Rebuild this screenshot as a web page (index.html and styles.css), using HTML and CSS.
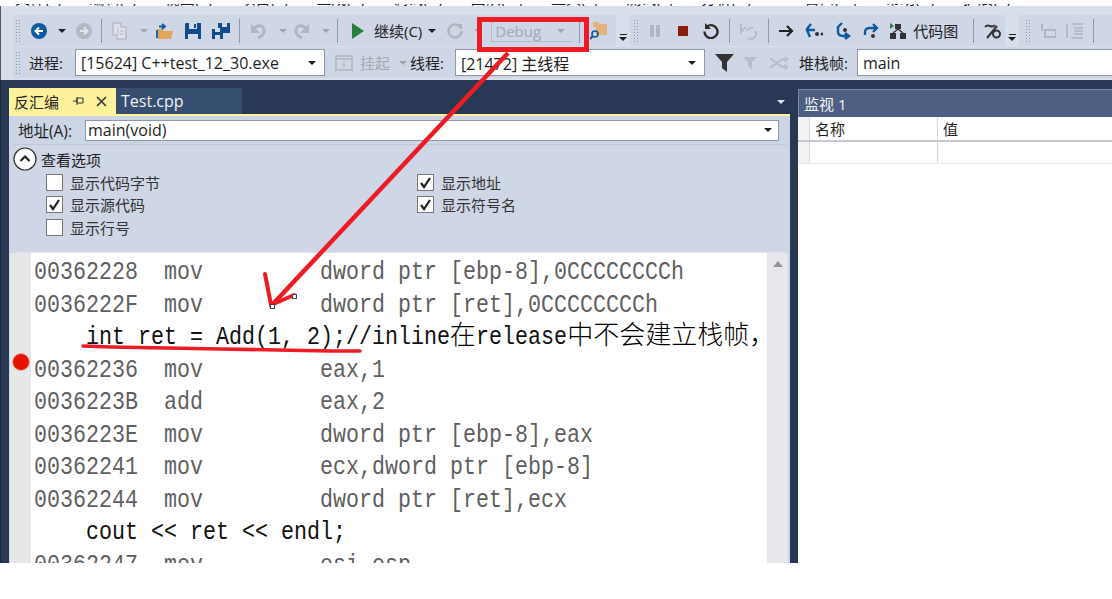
FILE: index.html
```html
<!DOCTYPE html>
<html lang="zh-CN">
<head>
<meta charset="utf-8">
<title>反汇编</title>
<link rel="stylesheet" href="styles.css">
</head>
<body>
<div class="page">
  <div class="menu"><div class="menu-clip"><div class="menu-text"><span>文件(F)</span><span>编辑(E)</span><span>视图(V)</span><span>项目(P)</span><span>生成(B)</span><span>调试(D)</span><span>团队(M)</span><span>工具(T)</span><span>测试(S)</span><span class="wide">分析(N)</span><span>窗口(W)</span><span>帮助(H)</span><span>扩展(X)</span></div></div></div>
  <div class="chrome">
    <div class="bar">
      <i class="grip"></i>
      <svg class="m10" width="16" height="16" viewBox="0 0 16 16"><circle cx="8" cy="8" r="8" fill="#0e5a9e"/><path d="M12 8H5M8 4.500 4.500 8 8 11.500" fill="none" stroke="#fff" stroke-width="2"/></svg>
      <i class="arrow dark m11"></i>
      <svg class="m11" width="16" height="16" viewBox="0 0 16 16"><circle cx="8" cy="8" r="8" fill="#b4b9c2"/><path d="M4 8h7M8 4.500 11.500 8 8 11.500" fill="none" stroke="#e3e6ee" stroke-width="2"/></svg>
      <i class="sep m9"></i>
      <svg class="m10" width="16" height="18" viewBox="0 0 16 18"><path d="M1 1h8v4h5v12H5V13H1z" fill="#dfe2ea" stroke="#b8bcc6" stroke-width="1.500"/><path d="M6 6v7M8 9h4M8 12h4" stroke="#b8bcc6"/></svg>
      <i class="arrow m12"></i>
      <svg class="m9" width="18" height="18" viewBox="0 0 18 18"><path d="M1 7h5l2 2h9l-2 8H2z" fill="#e2a75d"/><path d="M1 8v8M3 4.500h5M6 2l3 2.500L6 7" fill="none" stroke="#0e5a9e" stroke-width="1.800"/></svg>
      <svg class="m11" width="16" height="16" viewBox="0 0 16 16"><path d="M1 0h15v16H0V1z" fill="#0e4c8f"/><path d="M4 0h8v6H4zM3 11h10v5H3z" fill="#d3d9e7"/><path d="M9 1h2v4H9z" fill="#0e4c8f"/></svg>
      <svg class="m11" width="18" height="16" viewBox="0 0 18 16"><path d="M6 0h12v10H8V5H6z" fill="#0e4c8f"/><path d="M10 0h5v4h-5z" fill="#d3d9e7"/><path d="M0 6h11v10H0z" fill="#0e4c8f"/><path d="M3 6h5v3H3zM3 12h5v4H3z" fill="#d3d9e7"/></svg>
      <i class="sep m9"></i>
      <svg class="m10" width="16" height="16" viewBox="0 0 16 16"><path d="M1 1v9h9z" fill="#b0b5bf"/><path d="M4 5c3-3 9-3 10 1 1 4-2 7-6 9" fill="none" stroke="#b0b5bf" stroke-width="3"/></svg>
      <i class="arrow m13"></i>
      <svg class="m8" width="16" height="16" viewBox="0 0 16 16"><path d="M15 1v9H6z" fill="#b0b5bf"/><path d="M12 5C9 2 3 2 2 6c-1 4 2 7 6 9" fill="none" stroke="#b0b5bf" stroke-width="3"/></svg>
      <i class="arrow m12"></i>
      <i class="sep m8"></i>
      <svg class="m14" width="12" height="16" viewBox="0 0 12 16"><path d="M0 0l12 8-12 8z" fill="#26803a"/></svg>
      <span class="label m10">继续(C)</span>
      <i class="arrow dark m6"></i>
      <svg class="m12" width="16" height="16" viewBox="0 0 16 16"><path d="M13.500 4.500A6.500 6.500 0 1 0 14.500 8" fill="none" stroke="#b0b5bf" stroke-width="2.500"/><path d="M9 1h6v6z" fill="#b0b5bf"/></svg>
      <i class="arrow m11"></i>
      <div class="debug m10"><span>Debug</span><i class="arrow"></i></div>
      <i class="sep m7"></i>
      <svg class="m10" width="18" height="20" viewBox="0 0 18 20"><path d="M3 1h5l2 2h7v11H6V6H3z" fill="#e2b376"/><circle cx="5" cy="13" r="3" fill="none" stroke="#0e5a9e" stroke-width="1.600"/><path d="M3 15l-3 3" stroke="#0e5a9e" stroke-width="2"/></svg>
      <div class="band m8"><b></b><i class="arrow dark"></i></div>
      <i class="grip small m3"></i>
      <svg class="m12" width="10" height="12" viewBox="0 0 10 12"><path d="M0 0h4v12H0zM6 0h4v12H6z" fill="#b0b5bf"/></svg>
      <svg class="m18" width="10" height="10" viewBox="0 0 10 10"><path d="M0 0h10v10H0z" fill="#8e1e0c"/></svg>
      <svg class="m15" width="16" height="16" viewBox="0 0 16 16"><path d="M4 3.500A6.500 6.500 0 1 1 1.500 8.500" fill="none" stroke="#2c2c2c" stroke-width="2.400"/><path d="M2 0v6h6z" fill="#2c2c2c"/></svg>
      <i class="sep m10"></i>
      <svg class="m9" width="18" height="18" viewBox="0 0 18 18"><path d="M2 2v8l5-5M9 16a5 5 0 0 0 7-7M8 9a5 5 0 0 1 6-3" fill="none" stroke="#b8bcc6" stroke-width="2"/></svg>
      <i class="sep m11"></i>
      <svg class="m10" width="15" height="12" viewBox="0 0 15 12"><path d="M0 6h13M8 1l5 5-5 5" fill="none" stroke="#222" stroke-width="2.200"/></svg>
      <svg class="m11" width="18" height="16" viewBox="0 0 18 16"><path d="M6 1L2 6v1h8M5 14l-3-7" fill="none" stroke="#0e5a9e" stroke-width="2.400"/><circle cx="12" cy="11" r="2" fill="#333"/><circle cx="17" cy="11" r="1.500" fill="#333"/></svg>
      <svg class="m13" width="16" height="18" viewBox="0 0 16 18"><path d="M6 1L2 5v5c0 3 2 4 5 4h5M9 11l4 3-4 3" fill="none" stroke="#0e5a9e" stroke-width="2.400"/><circle cx="9" cy="8" r="2" fill="#333"/></svg>
      <svg class="m11" width="16" height="16" viewBox="0 0 16 16"><path d="M13 5H6a4 4 0 0 0-4 4v3M10 1l4 4-4 4" fill="none" stroke="#0e5a9e" stroke-width="2.400"/><circle cx="10" cy="13" r="2" fill="#333"/></svg>
      <svg class="m11" width="16" height="16" viewBox="0 0 16 16"><path d="M0 0l4 3-4 3z" fill="#26803a"/><path d="M5 1h6v5H5zM0 10h6v6H0zM10 10h6v6h-6z" fill="#333"/><path d="M8 6L3 10M8 6l5 4" stroke="#333" stroke-width="1.500"/></svg>
      <span class="label m7">代码图</span>
      <i class="sep m15"></i>
      <svg class="m10" width="18" height="17" viewBox="0 0 18 17"><path d="M1 5c4-5 6 3 10-2M3 16L13 4" fill="none" stroke="#333" stroke-width="2"/><circle cx="12.500" cy="12" r="3.500" fill="none" stroke="#333" stroke-width="2"/></svg>
      <div class="band m3"><b></b><i class="arrow dark"></i></div>
      <i class="grip small m6"></i>
      <svg class="m10" width="16" height="16" viewBox="0 0 16 16"><path d="M5 7h11v7H5zM2 1v7" fill="none" stroke="#b0b5bf" stroke-width="2"/></svg>
      <svg class="m10" width="18" height="16" viewBox="0 0 18 16"><path d="M1 1v14M5 1h12M5 15h12M8 5h9M8 8h9M8 11h9" stroke="#b8bcc6" stroke-width="2"/></svg>
      <i class="sep m9"></i>
    </div>
    <div class="bar second">
      <i class="grip"></i>
      <span class="label m8">进程:</span>
      <div class="combo process m12"><span>[15624] C++test_12_30.exe</span><i class="arrow dark"></i></div>
      <svg class="m10" width="18" height="16" viewBox="0 0 18 16"><path d="M1 1h16v14H1z" fill="none" stroke="#b8bcc6" stroke-width="2"/><path d="M1 4h16" stroke="#b8bcc6" stroke-width="2"/><path d="M10 6L7 10h3l-2 3" fill="none" stroke="#b8bcc6"/></svg>
      <span class="label muted m7">挂起</span>
      <i class="arrow m9"></i>
      <span class="label m4">线程:</span>
      <div class="combo thread m11"><span>[21472] 主线程</span><i class="arrow dark"></i></div>
      <svg class="m10" width="19" height="18" viewBox="0 0 19 18"><path d="M0 0h19l-7 8v10l-5-4V8z" fill="#333"/></svg>
      <svg class="m9" width="15" height="16" viewBox="0 0 15 16"><path d="M0 2h14l-5 5v7l-4-3V7z" fill="#b8bcc6"/></svg>
      <svg class="m12" width="18" height="12" viewBox="0 0 18 12"><path d="M0 2c4 0 9 8 14 8M0 10c4 0 9-8 14-8M14 0l4 2-4 2M14 8l4 2-4 2" fill="none" stroke="#b8bcc6" stroke-width="2"/></svg>
      <span class="label m11">堆栈帧:</span>
      <div class="combo frame m9"><span>main</span></div>
    </div>
  </div>
  <div class="body">
    <div class="doc">
      <div class="tabs">
        <div class="tab active"><span>反汇编</span><svg width="12" height="10" viewBox="0 0 12 10"><path d="M0 5h4M4 1v8M4 2h6v5H4z" fill="none" stroke="#333" stroke-width="1"/></svg><svg width="11" height="11" viewBox="0 0 11 11"><path d="M1 1l9 9M10 1l-9 9" stroke="#333" stroke-width="1.500"/></svg></div>
        <div class="tab other">Test.cpp</div>
        <i class="arrow white tabs-menu"></i>
      </div>
      <div class="doc-inner">
        <div class="address">
          <span class="addr-label">地址(A):</span>
          <div class="combo addr"><span>main(void)</span><i class="arrow dark"></i></div>
        </div>
        <div class="options">
          <div class="opt-head">
            <svg width="24" height="24" viewBox="0 0 24 24"><circle cx="12" cy="12" r="11" fill="#fff" stroke="#333" stroke-width="1.200"/><path d="M7.500 14 12 9.500 16.500 14" fill="none" stroke="#222" stroke-width="2.200"/></svg>
            <span>查看选项</span>
          </div>
          <div class="opt-cols">
            <div class="opt-col first">
              <label class="opt"><i class="box"></i>显示代码字节</label>
              <label class="opt"><i class="box"><svg width="15" height="15" viewBox="0 0 15 15"><path d="M3 8l3 4 6-9" fill="none" stroke="#222" stroke-width="2.200"/></svg></i>显示源代码</label>
              <label class="opt"><i class="box"></i>显示行号</label>
            </div>
            <div class="opt-col">
              <label class="opt"><i class="box"><svg width="15" height="15" viewBox="0 0 15 15"><path d="M3 8l3 4 6-9" fill="none" stroke="#222" stroke-width="2.200"/></svg></i>显示地址</label>
              <label class="opt"><i class="box"><svg width="15" height="15" viewBox="0 0 15 15"><path d="M3 8l3 4 6-9" fill="none" stroke="#222" stroke-width="2.200"/></svg></i>显示符号名</label>
            </div>
          </div>
        </div>
        <div class="editor">
          <div class="margin"><span class="bp"></span></div>
          <div class="code">
            <div class="code-text"><div class="asm">00362228  mov         dword ptr [ebp-8],0CCCCCCCCh</div><div class="asm">0036222F  mov         dword ptr [ret],0CCCCCCCCh</div><div class="src">    int ret = Add(1, 2);//inline<span class="cjk one">在</span>release<span class="cjk eight">中不会建立栈帧，</span></div><div class="asm">00362236  mov         eax,1</div><div class="asm">0036223B  add         eax,2</div><div class="asm">0036223E  mov         dword ptr [ebp-8],eax</div><div class="asm">00362241  mov         ecx,dword ptr [ebp-8]</div><div class="asm">00362244  mov         dword ptr [ret],ecx</div><div class="src">    cout &lt;&lt; ret &lt;&lt; endl;</div><div class="asm">00362247  mov         esi,esp</div></div>
          </div>
          <div class="scroll"><i class="up"></i></div>
        </div>
      </div>
    </div>
    <div class="watch">
      <div class="watch-title">监视 1</div>
      <div class="watch-head"><span class="c0"></span><span class="c1">名称</span><span class="c2">值</span></div>
      <div class="watch-row"><span class="c0"></span><span class="c1"></span><span class="c2"></span></div>
    </div>
  </div>
  <svg class="marks" width="1112" height="599" viewBox="0 0 1112 599">
    <rect x="479.500" y="19.500" width="107" height="30" fill="none" stroke="#ed1c24" stroke-width="5"/>
    <path d="M508 53 272 305" fill="none" stroke="#ed1c24" stroke-width="4.500"/>
    <path d="M265 274l6 31 23-10" fill="none" stroke="#ed1c24" stroke-width="4" stroke-linecap="round"/>
    <path d="M83 346l28 1 55 1 55 1 56 1 54 1h29" fill="none" stroke="#ed1c24" stroke-width="3.500" stroke-linecap="round"/>
    <rect x="270.500" y="304.500" width="4" height="4" fill="#fff" stroke="#444"/>
    <rect x="292.500" y="294.500" width="4" height="4" fill="#fff" stroke="#444"/>
  </svg>
</div>
</body>
</html>
```
FILE: styles.css
```css
* { box-sizing: border-box; }
html, body { margin: 0; padding: 0; background: #fff; }
body { font-family: "Open Sans", "Noto Sans CJK SC", sans-serif; font-size: 15px; color: #1e1e1e; overflow: hidden; }
i { font-style: normal; display: block; flex: none; }
svg { display: block; flex: none; }

.page { position: relative; width: 1112px; height: 599px; overflow: hidden; background: #fff; }

.menu { height: 6px; padding-top: 4px; background: #fff; }
.menu-clip { height: 2px; overflow: hidden; }
.menu-text { display: flex; gap: 28px; margin-top: -16px; padding-left: 15px; line-height: 20px; font-size: 15px; white-space: nowrap; }
.wide { padding-right: 25px; }

.chrome { height: 74px; padding-top: 9px; background: #d9deeb; border-left: 1px solid #55596a; }
.bar { display: flex; align-items: center; height: 31px; margin-left: 12px; padding-left: 2px; background: #cfd6e5; }
.bar > .arrow { margin-right: -1px; }
.second { margin-top: 1px; }
.label { font-size: 15px; line-height: 20px; color: #222; white-space: nowrap; flex: none; }
.muted { color: #a4a8b2; }

.grip { width: 6px; height: 24px; background-image: radial-gradient(#8f95a3 0.7px, transparent 1px); background-size: 3px 3px; }
.grip.small { width: 5px; }
.sep { width: 1px; height: 24px; background: #8f97a8; }
.arrow { width: 0; height: 0; border-left: 4px solid transparent; border-right: 4px solid transparent; border-top: 4px solid #a0a5b0; }
.arrow.dark { border-top-color: #1e1e1e; }
.arrow.white { border-top-color: #dfe3ec; }

.debug { display: flex; align-items: center; justify-content: space-between; width: 81px; height: 22px; padding: 0 6px 0 3px; border: 1px solid #b4b9c4; border-right-color: #cfd6e5; font-size: 15px; color: #a4a8b2; flex: none; }
.band { display: flex; flex-direction: column; align-items: center; justify-content: flex-end; gap: 2px; width: 14px; height: 31px; padding-bottom: 5px; background: #d9deeb; flex: none; }
.band b { width: 7px; height: 1px; background: #1e1e1e; }

.combo { display: flex; align-items: center; justify-content: space-between; background: #fff; border: 1px solid #8e97ab; padding: 0 8px 0 5px; font-size: 16px; white-space: nowrap; flex: none; }
.process { width: 250px; height: 27px; }
.thread { width: 250px; height: 27px; }
.frame { width: 260px; height: 27px; }

.m3 { margin-left: 3px; } .m4 { margin-left: 4px; } .m5 { margin-left: 5px; } .m6 { margin-left: 6px; } .m7 { margin-left: 7px; }
.m8 { margin-left: 8px; } .m9 { margin-left: 9px; } .m10 { margin-left: 10px; } .m11 { margin-left: 11px; }
.m12 { margin-left: 12px; } .m13 { margin-left: 13px; } .m14 { margin-left: 14px; } .m15 { margin-left: 15px; }
.m18 { margin-left: 18px; }

.body { display: flex; height: 483px; padding: 8px 0 0 8px; background: #293955; border-left: 1px solid #1c2536; }
.doc { width: 781px; flex: none; display: flex; flex-direction: column; }
.tabs { display: flex; height: 26px; position: relative; flex: none; }
.tab { height: 26px; display: flex; align-items: center; font-size: 16px; }
.tab.active { width: 107px; background: #fff29d; padding-left: 5px; color: #222; font-size: 15px; }
.tab.active svg:nth-of-type(1) { margin-left: 14px; }
.tab.active svg:nth-of-type(2) { margin-left: 11px; }
.tab.other { width: 126px; padding-left: 5px; background: #364e6f; color: #f1f3f7; }
.tabs-menu { position: absolute; right: 5px; top: 12px; }

.doc-inner { flex: 1; min-height: 0; border-top: 2px solid #fff29d; background: #ccd5e4; padding: 0 2px 0 1px; display: flex; flex-direction: column; }
.address { height: 28px; flex: none; display: flex; align-items: center; padding-left: 8px; }
.addr-label { width: 67px; flex: none; font-size: 15.500px; white-space: nowrap; }
.addr { width: 694px; height: 21px; padding-right: 6px; padding-left: 2px; }

.options { height: 109px; flex: none; margin-left: 1px; border-radius: 5px; background: #cfd6e5; border-top: 1px solid #bec8da; border-bottom: 1px solid #dfe4ee; padding: 2px 0 0 2px; }
.opt-head { display: flex; align-items: center; gap: 4px; height: 24px; font-size: 15px; }
.opt-cols { display: flex; padding-left: 33px; }
.opt-col { display: flex; flex-direction: column; }
.opt-col.first { width: 371px; }
.opt { display: flex; align-items: center; gap: 7px; height: 22.500px; font-size: 15px; color: #333; }
.box { width: 17px; height: 17px; background: #fff; border: 1px solid #777; padding: 0; }

.editor { flex: 1; min-height: 0; display: flex; background: #fff; }
.margin { width: 21px; flex: none; background: #e6e7e8; position: relative; }
.bp { position: absolute; left: 2px; top: 100px; width: 18px; height: 18px; border-radius: 50%; background: #e51400; border: 1.500px solid #e8b4ae; }
.code { width: 736px; flex: none; overflow: hidden; background: #fff; padding: 3px 0 0 3px; }
.code-text { width: 883px; transform: scaleX(0.8333); transform-origin: left top; font-family: "Liberation Mono", "Noto Sans CJK SC", monospace; font-size: 26px; line-height: 32.500px; white-space: pre; }
.asm { color: #5f5f5f; height: 32.500px; }
.src { color: #111; height: 32.500px; }
.cjk { display: inline-block; color: #000; font-family: "Noto Sans CJK SC", sans-serif; font-weight: 300; line-height: 0; transform: scaleX(1.2); transform-origin: left center; }
.cjk.one { margin-right: 5.200px; }
.cjk.eight { margin-right: 41.600px; }
.scroll { width: 21px; flex: none; background: #e8e8ec; display: flex; justify-content: center; padding-top: 8px; }
.up { width: 0; height: 0; border-left: 5px solid transparent; border-right: 5px solid transparent; border-bottom: 6px solid #8f95a1; }

.watch { width: 314px; flex: none; margin-left: 8px; margin-top: 1px; background: #fff; display: flex; flex-direction: column; }
.watch-title { height: 28px; background: #4d6082; color: #f2f4f8; font-size: 15px; line-height: 28px; padding-left: 5px; border-top: 1px solid #7a8aa6; border-left: 1px solid #7a8aa6; }
.watch-head, .watch-row { display: flex; font-size: 15px; }
.watch-head { height: 25px; line-height: 24px; border-bottom: 2px solid #c5c8d2; }
.watch-row { height: 22px; border-bottom: 1px solid #e6e7ea; }
.c0 { width: 12px; background: #f3f3f5; border-right: 1px solid #d6d8de; flex: none; }
.c1 { width: 128px; padding-left: 5px; border-right: 1px solid #d6d8de; flex: none; }
.c2 { flex: 1; padding-left: 5px; }

.marks { position: absolute; left: 0; top: 0; pointer-events: none; }
```
